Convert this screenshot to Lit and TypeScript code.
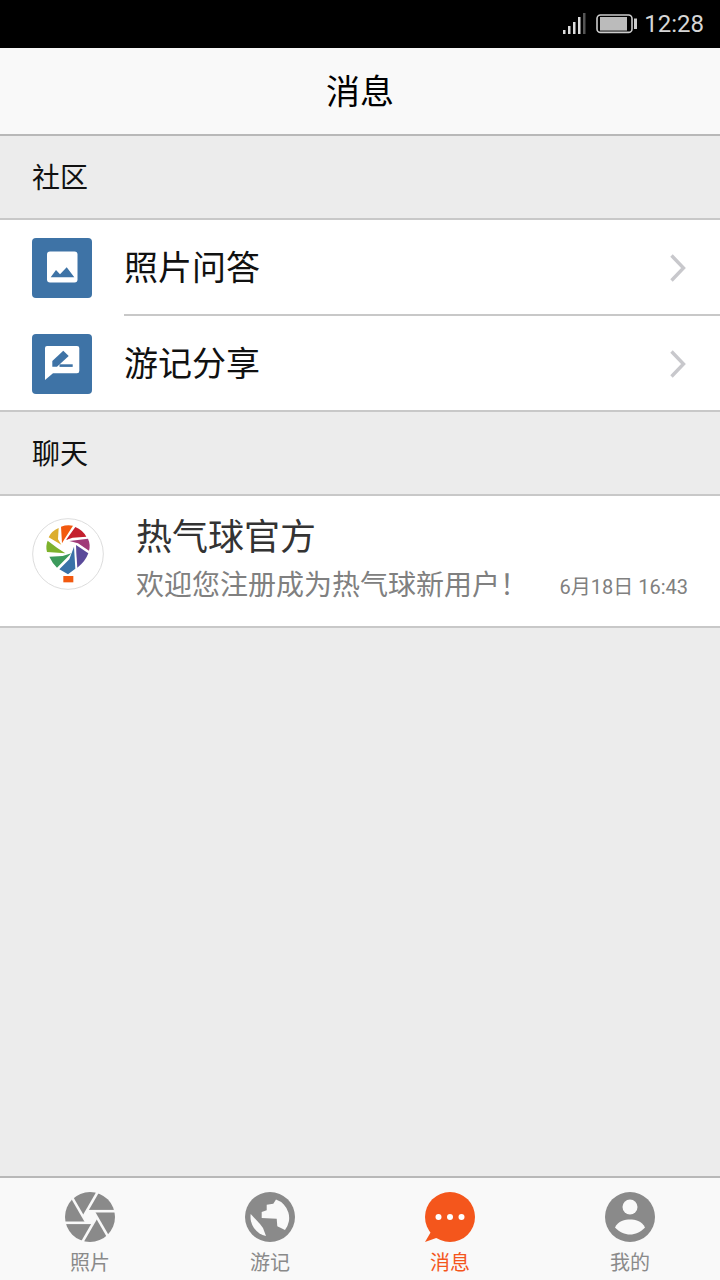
import { LitElement, html, css, svg } from 'lit';
import { customElement } from 'lit/decorators.js';

const BLADES = [
  { color: '#dcae2e', d: 'M20 52Q28 33 50 24L48 58L58 74Z' },
  { color: '#f2590f', d: 'M57 20Q75 13 93 17L68 56L60 70Z' },
  { color: '#c4202e', d: 'M100 21Q122 30 133 50L92 53L72 60Z' },
  { color: '#a03a78', d: 'M138 56Q146 74 141 92L108 70L82 63Z' },
  { color: '#5a4a9a', d: 'M139 100Q130 125 106 143L103 100L102 75Z' },
  { color: '#3a72a8', d: 'M96 80L100 146L78 163L52 148L82 118Z' },
  { color: '#3c9a5c', d: 'M45 143Q30 128 22 110L62 108L88 100Z' },
  { color: '#7db22c', d: 'M15 96Q10 78 17 62L46 84L70 100Z' },
];

const apertureLines = () => {
  const lines = [];
  const r = 6.7;
  for (let k = 0; k < 6; k++) {
    const a = ((k * 60 - 120) * Math.PI) / 180;
    const b = a + Math.PI / 3;
    const x1 = 25 + r * Math.cos(a);
    const y1 = 25 + r * Math.sin(a);
    const dx = Math.cos(b) - Math.cos(a);
    const dy = Math.sin(b) - Math.sin(a);
    lines.push(svg`<line x1=${x1} y1=${y1} x2=${x1 + dx * 30} y2=${y1 + dy * 30} stroke="#f9f9f9" stroke-width="2.6"></line>`);
  }
  return lines;
};

@customElement('app-root')
export class AppRoot extends LitElement {
  static styles = css`
    :host {
      display: flex;
      flex-direction: column;
      width: 720px;
      height: 1280px;
      background: #ececec;
      font-family: 'Noto Sans CJK SC', 'Noto Sans', sans-serif;
      color: #111;
    }
    .status {
      height: 48px;
      background: #000;
      display: flex;
      align-items: center;
      justify-content: flex-end;
      padding-right: 16px;
      box-sizing: border-box;
      flex: none;
    }
    .status svg {
      display: block;
    }
    .signal {
      margin-right: 9px;
    }
    .battery {
      margin-right: 7px;
    }
    .clock {
      font-family: Roboto, sans-serif;
      font-size: 24px;
      color: #d6d6d6;
      line-height: 48px;
    }
    .topbar {
      height: 88px;
      box-sizing: border-box;
      flex: none;
      background: #f9f9f9;
      border-bottom: 2px solid #b8b8b8;
      padding-bottom: 4px;
      display: flex;
      align-items: center;
      justify-content: center;
      font-size: 34px;
      color: #000;
    }
    .section {
      height: 84px;
      box-sizing: border-box;
      flex: none;
      border-bottom: 2px solid #c8c8c8;
      padding: 0 0 2px 32px;
      display: flex;
      align-items: center;
      font-size: 28px;
      color: #111;
    }
    .group {
      background: #fff;
      border-bottom: 2px solid #c8c8c8;
      flex: none;
    }
    .link {
      display: flex;
      align-items: center;
      height: 96px;
      padding-left: 32px;
      box-sizing: border-box;
    }
    .link.last {
      height: 94px;
    }
    .link.last .tile {
      margin-top: 2px;
    }
    .link .tile {
      width: 60px;
      height: 60px;
      flex: none;
      display: block;
    }
    .link .body {
      flex: 1;
      height: 100%;
      margin-left: 32px;
      display: flex;
      align-items: center;
      justify-content: space-between;
      box-sizing: border-box;
      padding-right: 32px;
      font-size: 34px;
      color: #111;
    }
    .link .body span {
      margin-bottom: 4px;
    }
    .link .body svg {
      margin-top: 2px;
    }
    .link:not(.last) .body {
      border-bottom: 2px solid #c8c8c8;
    }
    .chat {
      height: 130px;
      display: flex;
      align-items: flex-start;
      background: #fff;
      box-sizing: border-box;
      padding: 22px 32px 0;
    }
    .avatar {
      flex: none;
      display: block;
    }
    .chat .text {
      flex: 1;
      margin: -4px 0 0 32px;
      min-width: 0;
    }
    .chat .name {
      font-size: 36px;
      line-height: 40px;
      color: #333;
    }
    .chat .row {
      display: flex;
      justify-content: space-between;
      align-items: flex-end;
      margin-top: 7px;
    }
    .chat .preview {
      font-size: 28px;
      line-height: 44px;
      color: #808080;
      white-space: nowrap;
    }
    .chat .time {
      font-family: Roboto, 'Noto Sans CJK SC', sans-serif;
      font-size: 20px;
      line-height: 36px;
      color: #808080;
      white-space: nowrap;
    }
    .spacer {
      flex: 1;
    }
    .tabs {
      height: 104px;
      flex: none;
      box-sizing: border-box;
      border-top: 2px solid #b8b8b8;
      background: #f9f9f9;
      display: grid;
      grid-template-columns: repeat(4, 1fr);
    }
    .tab {
      display: flex;
      flex-direction: column;
      align-items: center;
      padding-top: 14px;
      font-size: 20px;
      line-height: 28px;
      color: #8a8a8a;
    }
    .tab svg {
      display: block;
      margin-bottom: 6px;
    }
    .tab.on {
      color: #f4561c;
    }
  `;

  chevron() {
    return html`<svg width="18" height="30" viewBox="0 0 18 30" fill="none" stroke="#c8c8cc" stroke-width="3.4">
      <path d="M1.5 2.5L13.5 15L1.5 27.5"></path>
    </svg>`;
  }

  render() {
    return html`
      <div class="status">
        <svg class="signal" width="24" height="22" viewBox="0 0 24 22">
          <rect x="0" y="17" width="2.5" height="4" fill="#ddd"></rect>
          <rect x="5" y="13" width="2.5" height="8" fill="#ddd"></rect>
          <rect x="10" y="9" width="2.5" height="12" fill="#ddd"></rect>
          <rect x="15" y="4" width="2.5" height="17" fill="#ddd"></rect>
          <rect x="20" y="0" width="2.5" height="21" fill="#555"></rect>
        </svg>
        <svg class="battery" width="41" height="20" viewBox="0 0 41 20">
          <rect x="1" y="1" width="35" height="17.4" rx="3.5" fill="none" stroke="#ccc" stroke-width="1.6"></rect>
          <rect x="4" y="3" width="27" height="13.6" fill="#bbb"></rect>
          <rect x="38" y="4.5" width="3" height="10.5" fill="#ccc"></rect>
        </svg>
        <span class="clock">12:28</span>
      </div>
      <div class="topbar">消息</div>
      <div class="section">社区</div>
      <div class="group">
        <div class="link">
          <svg class="tile" viewBox="0 0 60 60">
            <rect width="60" height="60" rx="4" fill="#3e73a6"></rect>
            <rect x="15" y="13.5" width="30.5" height="31" rx="3" fill="#fff"></rect>
            <path d="M18.7 39.3L24 32L28 36.3L34.7 29.3L42.3 39.3Z" fill="#3e73a6"></path>
          </svg>
          <div class="body"><span>照片问答</span>${this.chevron()}</div>
        </div>
        <div class="link last">
          <svg class="tile" viewBox="0 0 60 60">
            <rect width="60" height="60" rx="4" fill="#3e73a6"></rect>
            <path d="M15 12H45Q47.3 12 47.3 14V37Q47.3 39.3 45 39.3H21L13 46V14Q13 12 15 12Z" fill="#fff"></path>
            <path d="M20.3 32.7V27L31.3 16.7L36.7 22L25 32.7Z" fill="#3e73a6"></path>
            <rect x="27.5" y="30.3" width="13.2" height="2.6" fill="#3e73a6"></rect>
          </svg>
          <div class="body"><span>游记分享</span>${this.chevron()}</div>
        </div>
      </div>
      <div class="section">聊天</div>
      <div class="group">
        <div class="chat">
          <svg class="avatar" width="72" height="72" viewBox="36 24 216 216">
            <circle cx="144" cy="132" r="106" fill="#fff" stroke="#ddd" stroke-width="3"></circle>
            <g transform="translate(66 30)">
              ${BLADES.map((b) => svg`<path d=${b.d} fill=${b.color}></path>`)}
            </g>
            <rect x="130" y="198" width="30" height="19" fill="#f2590f"></rect>
          </svg>
          <div class="text">
            <div class="name">热气球官方</div>
            <div class="row">
              <span class="preview">欢迎您注册成为热气球新用户！</span>
              <span class="time">6月18日 16:43</span>
            </div>
          </div>
        </div>
      </div>
      <div class="spacer"></div>
      <div class="tabs">
        <div class="tab">
          <svg width="50" height="50" viewBox="0 0 50 50">
            <circle cx="25" cy="25" r="25" fill="#8a8a8a"></circle>
            ${apertureLines()}
            <path d="M18.3 25L21.65 19.2H28.35L31.7 25L28.35 30.8H21.65Z" fill="#f9f9f9"></path>
          </svg>
          照片
        </div>
        <div class="tab">
          <svg width="50" height="50" viewBox="0 0 50 50">
            <circle cx="25" cy="25" r="25" fill="#8a8a8a"></circle>
            <path d="M31 7.5A19.5 19.5 0 0 1 40 38L32.3 34.3L31.7 26.7L16.7 26V20L21.7 18.3V12.7L28.3 11.7Z" fill="#f9f9f9"></path>
            <path d="M5.7 22L15 32L18 36L21 44A19.5 19.5 0 0 1 5.7 22Z" fill="#f9f9f9"></path>
          </svg>
          游记
        </div>
        <div class="tab on">
          <svg width="50" height="50" viewBox="0 0 50 50">
            <circle cx="25" cy="25" r="25" fill="#f4561c"></circle>
            <path d="M7 38L0 50L14 45Z" fill="#f4561c"></path>
            <circle cx="13.5" cy="25" r="3" fill="#fff"></circle>
            <circle cx="25" cy="25" r="3" fill="#fff"></circle>
            <circle cx="36.5" cy="25" r="3" fill="#fff"></circle>
          </svg>
          消息
        </div>
        <div class="tab">
          <svg width="50" height="50" viewBox="0 0 50 50">
            <circle cx="25" cy="25" r="25" fill="#8a8a8a"></circle>
            <circle cx="25" cy="15" r="7.5" fill="#f9f9f9"></circle>
            <path d="M10 35.5C13 29 20 27.5 25 27.5C30 27.5 37 29 40 35.5C36 40 30 42.5 25 42.5C20 42.5 14 40 10 35.5Z" fill="#f9f9f9"></path>
          </svg>
          我的
        </div>
      </div>
    `;
  }
}
